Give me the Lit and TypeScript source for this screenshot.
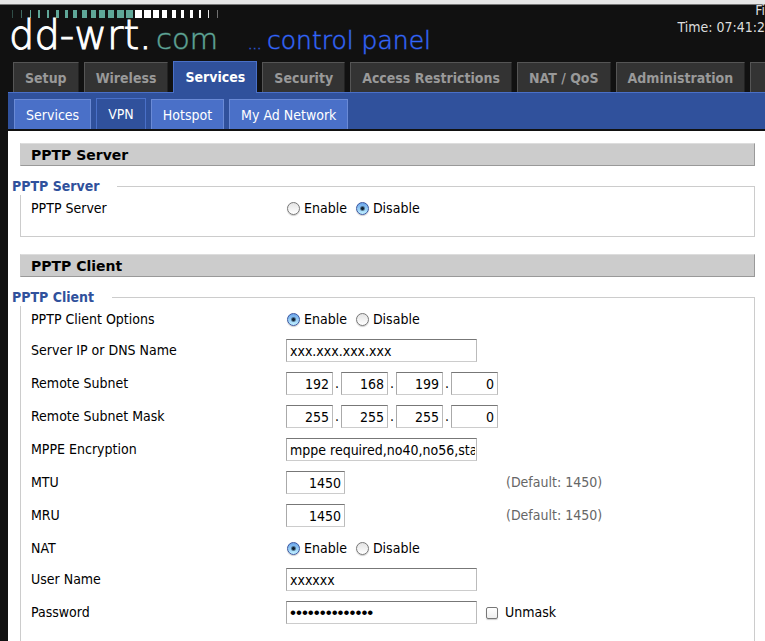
import { LitElement, html, css, svg } from "lit";
import { customElement, state } from "lit/decorators.js";
import { classMap } from "lit/directives/class-map.js";

const TABS = ["Setup", "Wireless", "Services", "Security", "Access Restrictions", "NAT / QoS", "Administration"];
const SUBTABS = ["Services", "VPN", "Hotspot", "My Ad Network"];
// x position, width and opacity of each bar above the wordmark
const BARS = [
  [12, 1, 0.4], [21, 1, 0.6], [30, 1, 1], [38, 2, 1], [47, 2, 1], [56, 3, 1], [65, 3, 1], [73, 4, 1], [82, 5, 1],
  [91, 5, 1], [99, 6, 1], [108, 6, 1], [117, 7, 1], [126, 7, 1], [135, 7, 1], [144, 7, 1], [153, 6, 1],
  [162, 5, 1], [172, 4, 1], [181, 3, 1], [190, 3, 1], [199, 2, 1], [208, 1, 0.9], [217, 1, 0.4],
];

@customElement("app-root")
export class AppRoot extends LitElement {
  @state() private tab = "Services";
  @state() private sub = "VPN";

  static styles = css`
    :host {
      display: block;
      min-height: 100vh;
      overflow: hidden;
      background: #111;
      color: #000;
      font: 14px/17px "DejaVu Sans Condensed", "Noto Sans", sans-serif;
    }
    * { box-sizing: border-box; }
    a { color: inherit; text-decoration: none; }
    .edge { height: 5px; background: #e6e6e6; border-bottom: 1px solid #777; }
    .header { display: flex; justify-content: space-between; height: 57px; padding-left: 8px; }
    .logo { flex: none; width: 440px; height: 52px; overflow: visible; }
    .word { font-family: "DejaVu Sans Light", "DejaVu Sans", sans-serif; font-weight: 200; stroke-opacity: 0.5; }
    .brand { font-size: 40px; fill: #fff; stroke: #fff; stroke-opacity: 1; }
    .domain { font-size: 29px; fill: #5fa798; stroke: #5fa798; }
    .panel { font-size: 25px; fill: #3366ff; stroke: #3366ff; }
    .lead { font-size: 14px; }
    .info { margin-top: -3px; color: #ddd; text-align: right; white-space: nowrap; }
    .page { display: flex; flex-direction: column; min-height: calc(100vh - 62px); margin-left: 8px; }
    .tabs {
      position: relative; display: flex; align-items: flex-end; gap: 5px;
      height: 30px; padding-left: 5px; font-weight: bold;
    }
    .tab {
      flex: none; height: 30px; padding: 7px 11px 0; white-space: nowrap;
      color: #999; background: #333;
      border: 1px solid; border-color: #555 #222 #333 #555; border-bottom: 0;
    }
    .tab.on {
      height: 32px; margin-bottom: -1px; color: #fff; background: #30519c;
      border-color: #4a70c8;
    }
    .more { width: 60px; }
    .subs {
      display: flex; align-items: flex-end; gap: 5px; height: 39px; padding-left: 6px;
      background: #30519c; border-top: 1px solid #4a70c8; border-bottom: 2px solid #111;
    }
    .sub {
      height: 30px; padding: 7px 11px 0; white-space: nowrap; color: #fff;
      background: #4a70c8; border: 1px solid #6a8ad6; border-bottom: 0;
    }
    .sub.on { height: 31px; background: #30519c; border-color: #4a70c8; }
    .main { flex: 1; padding: 12px 10px 0 12px; background: #fff; }
    h2 {
      margin: 0 0 12px; height: 23px; padding: 3px 10px;
      font: bold 14px/17px "DejaVu Sans", sans-serif;
      background: #ccc; border: 1px solid; border-color: #ddd #999 #999 #ccc;
    }
    fieldset { min-width: 0; margin: 0 0 17px; padding: 0 10px 12px; border: 1px solid #ccc; }
    legend {
      margin-left: -19px; padding: 0 18px 0 0; line-height: 17px;
      font-weight: bold; color: #30519c; background: #fff;
    }
    .rows { margin-top: -2px; }
    .row {
      display: grid; grid-template-columns: 255px 1fr; align-items: center;
      height: 33px; padding-bottom: 2px;
    }
    .row.pick { height: 31px; padding: 0; }
    .cells { display: flex; align-items: center; }
    .choice { display: flex; align-items: center; gap: 4px; margin-right: 8px; padding-left: 1px; }
    input { margin: 0; }
    .text {
      width: 191px; height: 23px; padding: 0 1px 0 3px; font: inherit; color: #000;
      border: 1px solid; border-color: #777 #bbb #ccc #aaa; border-radius: 0; outline: 0; background: #fff;
    }
    .octet, .num { padding: 0 3px; text-align: right; }
    .octet { width: 47px; }
    .num { width: 59px; }
    .dot { width: 8px; text-align: center; }
    .slot { width: 220px; }
    .hint { color: #666; }
    .secret { font: 17px "Liberation Sans", sans-serif; }
    .radio, .check { appearance: none; width: 13px; height: 13px; border: 1px solid #777; }
    .radio {
      border-radius: 50%; background: linear-gradient(#e4e4e4, #fff);
      box-shadow: 0 1px 1px #ccc;
    }
    .radio:checked {
      border-color: #3a55a0;
      background: radial-gradient(circle at 50% 50%, #123 0 1px, transparent 3px), linear-gradient(#6aa5ea, #bff0ff);
    }
    .check { border-radius: 2px; background: linear-gradient(#fff, #eee); width: 12px; height: 12px; box-shadow: 0 1px 1px #ccc; }
    .unmask { margin-left: 8px; gap: 7px; }
  `;

  private choice(name: string, label: string, checked: boolean) {
    return html`<label class="choice"><input class="radio" type="radio" name=${name} .checked=${checked} />${label}</label>`;
  }

  private pick(title: string, name: string, enabled: boolean) {
    return html`<div class="row pick" role="radiogroup" aria-label=${title}>
      <span>${title}</span>
      <div class="cells">${this.choice(name, "Enable", enabled)}${this.choice(name, "Disable", !enabled)}</div>
    </div>`;
  }

  private text(title: string, id: string, value: string) {
    return html`<div class="row">
      <label for=${id}>${title}</label>
      <div class="cells"><input class="text" id=${id} type="text" .value=${value} /></div>
    </div>`;
  }

  private address(title: string, id: string, parts: string[]) {
    return html`<div class="row">
      <label for="${id}0">${title}</label>
      <div class="cells">
        ${parts.map((p, i) => html`${i ? html`<span class="dot">.</span>` : ""}<input
          class="text octet" id="${id}${i}" type="text" aria-label="${title} ${i + 1}" .value=${p} />`)}
      </div>
    </div>`;
  }

  private size(title: string) {
    return html`<div class="row">
      <label for=${title}>${title}</label>
      <div class="cells">
        <div class="slot"><input class="text num" id=${title} type="text" .value=${"1450"} /></div>
        <span class="hint">(Default: 1450)</span>
      </div>
    </div>`;
  }

  render() {
    return html`
      <div class="edge"></div>
      <header class="header">
        <svg class="logo" viewBox="8 5 440 52" role="img" aria-label="dd-wrt.com control panel">
          ${BARS.map(([x, w, o], i) => svg`<rect x=${x} y="10" width=${w} height="8" opacity=${o} fill=${i < 14 ? "#5fa798" : "#fff"} />`)}
          <text class="word brand" x="9" y="49">dd-wrt.</text>
          <text class="word domain" x="156" y="49">com</text>
          <text class="word panel lead" x="248" y="49">...</text>
          <text class="word panel" x="267" y="49">control panel</text>
        </svg>
        <div class="info"><div>Fi</div><div>Time: 07:41:2</div></div>
      </header>
      <div class="page">
        <nav class="tabs">
          ${TABS.map((t) => html`<a href="#" class=${classMap({ tab: true, on: t === this.tab })} @click=${() => (this.tab = t)}>${t}</a>`)}
          <a href="#" class="tab more" aria-label="More"></a>
        </nav>
        <nav class="subs">
          ${SUBTABS.map((t) => html`<a href="#" class=${classMap({ sub: true, on: t === this.sub })} @click=${() => (this.sub = t)}>${t}</a>`)}
        </nav>
        <main class="main">
          <h2>PPTP Server</h2>
          <fieldset>
            <legend>PPTP Server</legend>
            <div class="rows">${this.pick("PPTP Server", "server", false)}</div>
          </fieldset>
          <h2>PPTP Client</h2>
          <fieldset>
            <legend>PPTP Client</legend>
            <div class="rows">
              ${this.pick("PPTP Client Options", "client", true)}
              ${this.text("Server IP or DNS Name", "host", "xxx.xxx.xxx.xxx")}
              ${this.address("Remote Subnet", "net", ["192", "168", "199", "0"])}
              ${this.address("Remote Subnet Mask", "mask", ["255", "255", "255", "0"])}
              ${this.text("MPPE Encryption", "mppe", "mppe required,no40,no56,stateless")}
              ${this.size("MTU")}
              ${this.size("MRU")}
              ${this.pick("NAT", "nat", true)}
              ${this.text("User Name", "user", "xxxxxx")}
              <div class="row">
                <label for="pass">Password</label>
                <div class="cells">
                  <input class="text secret" id="pass" type="password" .value=${"xxxxxxxxxxxxxx"} />
                  <label class="choice unmask"><input class="check" type="checkbox" />Unmask</label>
                </div>
              </div>
            </div>
          </fieldset>
        </main>
      </div>
    `;
  }
}
